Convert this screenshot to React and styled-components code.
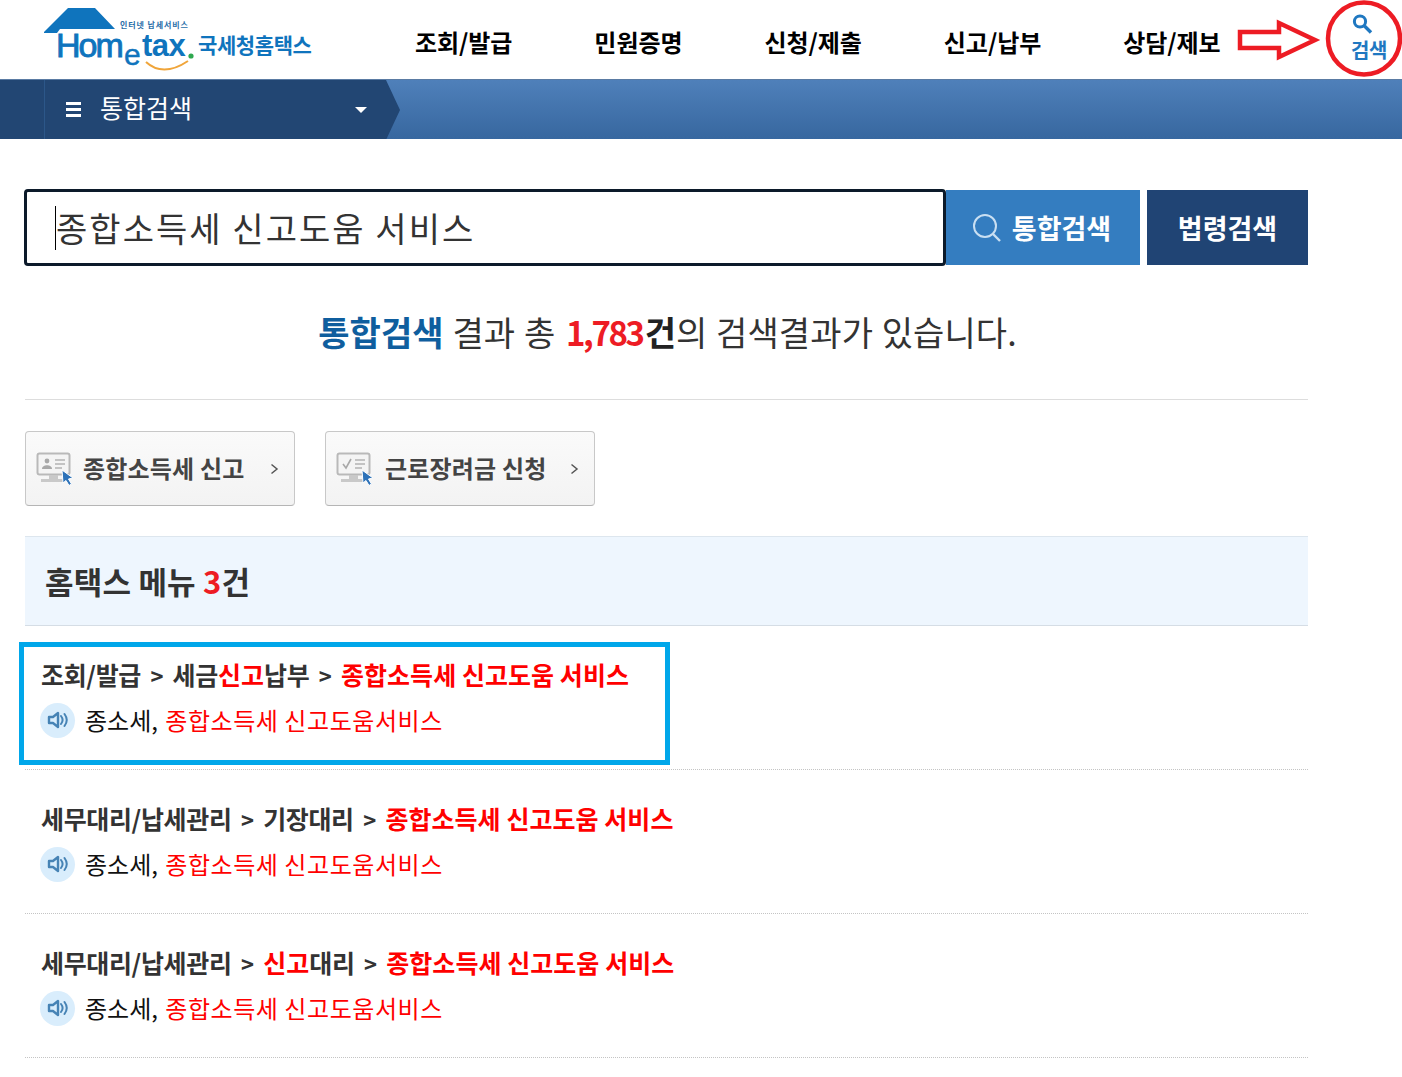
import React from "react";
import styled, { createGlobalStyle } from "styled-components";

const Global = createGlobalStyle`
  html, body { margin: 0; padding: 0; background: #fff; }
  body { font-family: "Noto Sans CJK KR", "Noto Sans", sans-serif; color: #333; width: 1402px; height: 1077px; overflow: hidden; }
  * { box-sizing: border-box; }
`;
const Page = styled.div`position: relative; width: 1402px; height: 1077px; overflow: hidden;`;
const Header = styled.header`display: flex; align-items: flex-start; height: 79px;`;
const LogoBox = styled.div`width: 415px; flex: none; padding: 8px 0 0 43px;`;
const Gnb = styled.nav`display: flex; gap: 82px; width: 930px; flex: none;`;
const GnbItem = styled.a`
  flex: none; font-size: 24px; line-height: 30px; font-weight: 700; color: #000;
  letter-spacing: -0.05px; padding-top: 27px; white-space: nowrap;
`;
const SearchLink = styled.a`
  display: flex; flex-direction: column; align-items: center; width: 38px; margin-left: 5px; padding-top: 13px;
  color: #1f78c1; font-size: 20px; line-height: 24px; font-weight: 700; letter-spacing: -0.3px; white-space: nowrap;
`;
const SearchGlyph = styled.svg`align-self: flex-start; margin: 0 0 3px 1px;`;
const Annotation = styled.svg`position: absolute; left: 1230px; top: 0; pointer-events: none;`;
const NavBar = styled.div`
  display: flex; height: 60px; border-top: 1px solid #5a7ba3;
  background: linear-gradient(#4f80ba, #37679f); overflow: hidden;
`;
const NavStub = styled.div`width: 45px; flex: none; background: #224673; border-right: 1px solid #2c5789;`;
const NavSelect = styled.div`
  position: relative; width: 355px; flex: none; background: #224673; display: flex; align-items: center;
  padding: 0 0 6px 21px; color: #fff; font-size: 25px; clip-path: polygon(0 0, 341px 0, 355px 30px, 341px 60px, 0 60px);
`;
const Burger = styled.span`
  width: 15px; height: 15px; margin: 6px 19px 0 0; flex: none;
  border-top: 3px solid #fff; border-bottom: 3px solid #fff; position: relative;
  &::after { content: ""; position: absolute; left: 0; right: 0; top: 3px; height: 3px; background: #fff; }
`;
const Caret = styled.span`
  position: absolute; left: 310px; top: 27px; width: 0; height: 0;
  border-left: 6px solid transparent; border-right: 6px solid transparent; border-top: 6px solid #fff;
`;
const Main = styled.main`width: 1283px; margin-left: 25px; padding-top: 51px;`;
const SearchRow = styled.div`display: flex; height: 75px;`;
const SearchInput = styled.div`
  width: 922px; height: 77px; margin: -1px 0 0 -1px; flex: none; border: 3px solid #0c1a2a; border-radius: 4px;
  display: flex; align-items: center; padding-left: 28px;
  font-size: 34px; letter-spacing: 2.05px; color: #333; white-space: nowrap;
`;
const Cursor = styled.span`width: 1px; height: 44px; background: #000; flex: none;`;
const SearchBtn = styled.button`
  height: 75px; border: 0; padding: 0 ${p => p.$pr}px 0 0; flex: none; color: #fff; font: 700 27px "Noto Sans CJK KR", sans-serif;
  letter-spacing: 0; display: flex; align-items: center; justify-content: center; gap: 10px;
  width: ${p => p.$w}px; margin-left: ${p => p.$ml}px; background: ${p => p.$bg};
`;
const Summary = styled.div`
  height: 135px; border-bottom: 1px solid #ddd; text-align: center; padding: 43px 0 0 2px; font-size: 34px; line-height: 48px;
  letter-spacing: 0.1px; word-spacing: 1px; color: #333; white-space: nowrap;
`;
const Blue = styled.b`color: #0f5e9e; font-weight: 700;`;
const Count = styled.b`color: #ed1c24; font-weight: 700; font-size: 33px; letter-spacing: -2.4px; margin: 0 2px 0 2px;`;
const Dark = styled.b`color: #222; font-weight: 700;`;
const QuickRow = styled.div`display: flex; gap: 30px; padding-top: 31px; height: 136px;`;
const Quick = styled.a`
  width: 270px; height: 75px; border: 1px solid #c8c8c8; border-bottom-color: #b5b5b5; border-radius: 4px; background: linear-gradient(#fafafa, #f3f3f3);
  display: flex; align-items: center; padding-left: 10px; font-size: 24px; font-weight: 700; color: #444; letter-spacing: 0.2px;
  white-space: nowrap;
`;
const QuickLabel = styled.span`margin-left: ${p => p.$ml}px; flex: 1; padding-bottom: 2px;`;
const Chevron = styled.svg`flex: none; margin-right: 15px;`;
const MenuHead = styled.h2`
  margin: 0; height: 90px; background: #eef6fe; border-top: 1px solid #dde6ee; border-bottom: 1px solid #d5dde5;
  padding-left: 20px; font-size: 31px; line-height: 88px; font-weight: 700; color: #333; letter-spacing: 0.2px;
`;
const HeadNum = styled.span`color: #ed1c24; font-weight: 700;`;
const Result = styled.div`height: 144px; border-bottom: 1px dotted #c4c4c4; padding: 31px 0 0 16px;`;
const Crumbs = styled.div`
  height: 34px; font-size: 25px; line-height: 34px; font-weight: 700; color: #333; letter-spacing: -0.35px; white-space: nowrap;
`;
const Sep = styled.span`margin: 0 9.5px; font-size: 22px;`;
const Hit = styled.span`color: #f00; font-weight: 700; letter-spacing: 0.05px;`;
const Desc = styled.div`
  display: flex; align-items: center; margin-top: 11px; font-size: 24px; line-height: 36px; color: #111; white-space: nowrap;
`;
const Speaker = styled.span`
  width: 35px; height: 35px; border-radius: 50%; background: #d9edfc; flex: none; margin-right: 10px;
  display: flex; align-items: center; justify-content: center; margin-left: -1px;
`;
const Red = styled.span`color: #f00; letter-spacing: 0.55px; margin-left: 2px;`;
const Highlight = styled.div`
  position: absolute; left: 19px; top: 642px; width: 651px; height: 123px; border: 5px solid #00a7ea; pointer-events: none;
`;

const Logo = () => (
  <svg width="272" height="66" viewBox="0 0 272 66" fill="none">
    <path d="M1 24 L25 0 L52 0 L72 21 L17 21 L14 25 L1 25 Z" fill="#0f74bd" />
    <text x="77" y="20" fontSize="8" fontWeight="700" fill="#2a6ea8" letterSpacing="0.9">인터넷 납세서비스</text>
    <text x="13" y="49" fontFamily="Liberation Sans, sans-serif" fontSize="34" fill="#0f74bd" letterSpacing="-2" stroke="#0f74bd" strokeWidth=".9">Hom</text>
    <text x="81" y="57" fontFamily="Liberation Sans, sans-serif" fontSize="30" fill="#0f74bd" stroke="#0f74bd" strokeWidth=".4">e</text>
    <text x="99" y="48" fontFamily="Liberation Sans, sans-serif" fontSize="31" fontWeight="700" fill="#0f74bd" letterSpacing="-0.5">tax</text>
    <circle cx="148" cy="48" r="2.6" fill="#2fa84f" />
    <path d="M103 54 C 115 65, 130 63, 145 53" stroke="#f0a53a" strokeWidth="2" />
    <text x="155" y="45" fontSize="21" fontWeight="700" fill="#0f74bd" letterSpacing="-0.4">국세청홈택스</text>
  </svg>
);

const QuickIcon = ({ check }) => (
  <svg width="38" height="34" viewBox="0 0 38 34" fill="none">
    <rect x="1.5" y="1.5" width="32" height="21" rx="2" fill="#f4f4f4" stroke="#b9b9b9" strokeWidth="2" />
    <rect x="13" y="23" width="9" height="4" fill="#c9c9c9" />
    <rect x="5" y="27" width="24" height="3" fill="#c9c9c9" />
    {check ? (
      <path d="M7 12 L10 16 L15 7" stroke="#a8a8a8" strokeWidth="1.6" />
    ) : (
      <>
        <circle cx="11" cy="9" r="2.4" fill="#a8a8a8" />
        <path d="M6 17 C 6 12, 16 12, 16 17 Z" fill="#a8a8a8" />
      </>
    )}
    <path d="M19 8 H29 M19 12 H29 M19 16 H26" stroke="#b3b3b3" strokeWidth="1.6" />
    <path d="M26 18 L37 26 L32.5 27 L35.5 32 L33 33.5 L30 28.5 L27 31 Z" fill="#2d72b8" stroke="#fff" strokeWidth="1" />
  </svg>
);

const SpeakerIcon = () => (
  <svg width="24" height="20" viewBox="0 0 24 20" fill="none">
    <path d="M3 7 H7 L12 3 V17 L7 13 H3 Z" stroke="#4683b5" strokeWidth="2.4" strokeLinejoin="round" />
    <path d="M15 6 C 17 8.5, 17 11.5, 15 14 M18.5 4 C 21.5 8, 21.5 12, 18.5 16" stroke="#4683b5" strokeWidth="2" strokeLinecap="round" />
  </svg>
);

const Next = () => (
  <Chevron width="9" height="12" viewBox="0 0 9 12" fill="none">
    <path d="M1.5 1.5 L7 6 L1.5 10.5" stroke="#555" strokeWidth="1.5" />
  </Chevron>
);

const ResultRow = ({ crumbs }) => (
  <Result>
    <Crumbs>{crumbs}</Crumbs>
    <Desc>
      <Speaker><SpeakerIcon /></Speaker>
      종소세,&nbsp;<Red>종합소득세 신고도움서비스</Red>
    </Desc>
  </Result>
);

export default function App() {
  return (
    <Page>
      <Global />
      <Header>
        <LogoBox><Logo /></LogoBox>
        <Gnb>
          <GnbItem>조회/발급</GnbItem>
          <GnbItem>민원증명</GnbItem>
          <GnbItem>신청/제출</GnbItem>
          <GnbItem>신고/납부</GnbItem>
          <GnbItem>상담/제보</GnbItem>
        </Gnb>
        <SearchLink>
          <SearchGlyph width="22" height="22" viewBox="0 0 22 22" fill="none">
            <circle cx="9" cy="8.5" r="5.6" stroke="#1f78c1" strokeWidth="3" />
            <path d="M13.5 13 L20 19.5" stroke="#1f78c1" strokeWidth="3.4" />
          </SearchGlyph>
          검색
        </SearchLink>
      </Header>
      <Annotation width="172" height="79" viewBox="0 0 172 79" fill="none">
        <path d="M10 32 H49 V23 L85 40 L49 57 V48 H10 Z" stroke="#ed1c24" strokeWidth="4.5" fill="#fff" />
        <ellipse cx="134" cy="38.5" rx="36" ry="36" stroke="#ed1c24" strokeWidth="4.5" />
      </Annotation>
      <NavBar>
        <NavStub />
        <NavSelect>
          <Burger />
          통합검색
          <Caret />
        </NavSelect>
      </NavBar>
      <Main>
        <SearchRow>
          <SearchInput><Cursor />종합소득세 신고도움 서비스</SearchInput>
          <SearchBtn $w={194} $ml={0} $pr={3} $bg="#347dc0">
            <svg width="30" height="30" viewBox="0 0 30 30" fill="none">
              <circle cx="13" cy="13" r="11" stroke="#c9dff2" strokeWidth="2" />
              <path d="M21 21 L28 28" stroke="#c9dff2" strokeWidth="2.4" />
            </svg>
            통합검색
          </SearchBtn>
          <SearchBtn $w={161} $ml={7} $pr={0} $bg="#204474">법령검색</SearchBtn>
        </SearchRow>
        <Summary>
          <Blue>통합검색</Blue> 결과 총 <Count>1,783</Count><Dark>건</Dark>의 검색결과가 있습니다.
        </Summary>
        <QuickRow>
          <Quick><QuickIcon /><QuickLabel $ml={9}>종합소득세 신고</QuickLabel><Next /></Quick>
          <Quick><QuickIcon check /><QuickLabel $ml={11}>근로장려금 신청</QuickLabel><Next /></Quick>
        </QuickRow>
        <MenuHead>홈택스 메뉴 <HeadNum>3</HeadNum>건</MenuHead>
        <ResultRow crumbs={<>조회/발급<Sep>&gt;</Sep>세금<Hit>신고</Hit>납부<Sep>&gt;</Sep><Hit>종합소득세 신고도움 서비스</Hit></>} />
        <ResultRow crumbs={<>세무대리/납세관리<Sep>&gt;</Sep>기장대리<Sep>&gt;</Sep><Hit>종합소득세 신고도움 서비스</Hit></>} />
        <ResultRow crumbs={<>세무대리/납세관리<Sep>&gt;</Sep><Hit>신고</Hit>대리<Sep>&gt;</Sep><Hit>종합소득세 신고도움 서비스</Hit></>} />
      </Main>
      <Highlight />
    </Page>
  );
}
